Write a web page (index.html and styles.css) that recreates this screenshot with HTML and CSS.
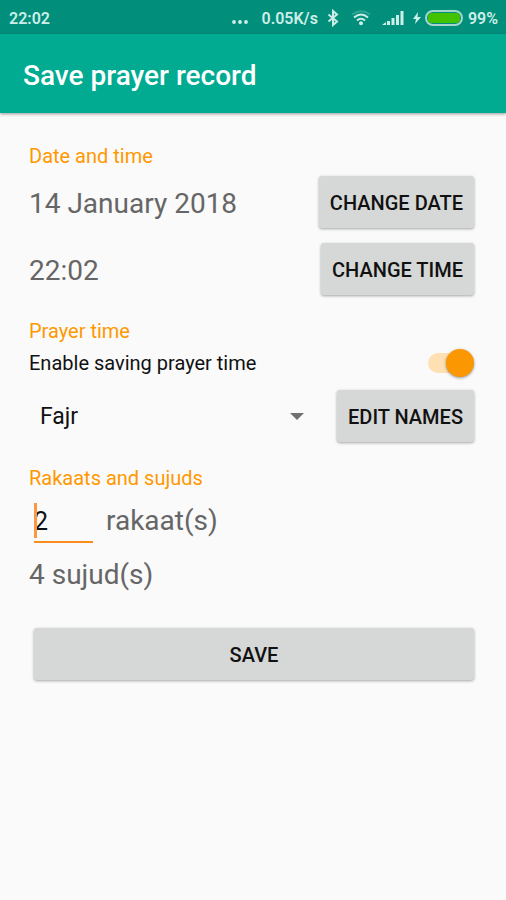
FILE: index.html
```html
<!DOCTYPE html>
<html lang="en">
<head>
    <meta charset="UTF-8">
    <meta name="viewport" content="width=device-width, initial-scale=1.0">
    <title>Save prayer record</title>
    <link rel="stylesheet" href="styles.css">
</head>
<body>
    <!-- Status bar -->
    <div class="status-bar">
        <span class="clock">22:02</span>
        <div class="status-icons">
            <svg class="dots" width="18" height="16" viewBox="0 0 18 16">
                <circle cx="3" cy="12" r="1.900"/>
                <circle cx="9" cy="12" r="1.900"/>
                <circle cx="15" cy="12" r="1.900"/>
            </svg>
            <span class="speed">0.05K/s</span>
            <svg class="bluetooth" width="12" height="18" viewBox="0 0 12 18">
                <path d="M1.500 5.500l8.500 7L6 16V2l4 3.500-8.500 7"/>
            </svg>
            <svg class="wifi" width="20" height="16" viewBox="0 0 20 16">
                <path class="wifi-faint" d="M1 4.500Q10-2 19 4.500"/>
                <path d="M3 7.500Q10 1.500 17 7.500M6 10.500Q10 7 14 10.500"/>
                <circle cx="10" cy="13.300" r="2"/>
            </svg>
            <svg class="signal" width="22" height="16" viewBox="0 0 22 16">
                <path d="M0 15l4-3v3zM5 11h3v4H5zM9.500 8h3v7h-3zM14 5h3v10h-3zM18.500 1H21.500v14h-3z"/>
            </svg>
            <svg class="bolt" width="8" height="14" viewBox="0 0 8 14">
                <path d="M5 1L0 8h3l-1 5 6-7H4.500z"/>
            </svg>
            <svg class="battery" width="38" height="16" viewBox="0 0 38 16">
                <rect class="battery-case" x="1" y="1" width="36" height="14" rx="7"/>
                <rect class="battery-level" x="3" y="3" width="32" height="10" rx="4"/>
            </svg>
            <span>99%</span>
        </div>
    </div>

    <header class="app-bar">
        <h1>Save prayer record</h1>
    </header>

    <form class="record-form">
        <!-- Date and time -->
        <section>
            <h2>Date and time</h2>
            <div class="row">
                <span class="value">14 January 2018</span>
                <button type="button" class="btn">CHANGE DATE</button>
            </div>
            <div class="row">
                <span class="value">22:02</span>
                <button type="button" class="btn">CHANGE TIME</button>
            </div>
        </section>

        <!-- Prayer time -->
        <section>
            <h2>Prayer time</h2>
            <div class="switch-row">
                <label for="enable-time">Enable saving prayer time</label>
                <input type="checkbox" id="enable-time" class="switch" role="switch" checked>
            </div>
            <div class="row">
                <div class="spinner">
                    <select id="prayer-name" aria-label="Prayer name">
                        <option selected>Fajr</option>
                    </select>
                    <svg class="arrow" width="14" height="8" viewBox="0 0 14 8">
                        <path d="M0 0h14L7 7z"/>
                    </svg>
                </div>
                <button type="button" class="btn">EDIT NAMES</button>
            </div>
        </section>

        <!-- Rakaats and sujuds -->
        <section>
            <h2>Rakaats and sujuds</h2>
            <div class="rakaat-row">
                <div class="count">
                    <input type="text" id="rakaats" inputmode="numeric" value="2">
                    <span class="caret"></span>
                </div>
                <label class="value" for="rakaats">rakaat(s)</label>
            </div>
            <p class="value">4 sujud(s)</p>
        </section>

        <button type="submit" class="btn save-btn">SAVE</button>
    </form>
</body>
</html>
```
FILE: styles.css
```css
* {
    margin: 0;
    padding: 0;
    box-sizing: border-box;
    font-family: Roboto, sans-serif;
}

body {
    background-color: #fafafa;
    color: #111;
    min-height: 100vh;
}

.status-bar {
    display: flex;
    align-items: center;
    justify-content: space-between;
    height: 34px;
    padding: 2px 8px 0 9px;
    background-color: #018f7c;
    color: #cdeee8;
    font-size: 16px;
    font-weight: 600;
}

.status-icons {
    display: flex;
    align-items: center;
}

.status-icons svg {
    fill: #cdeee8;
}

.speed {
    margin: 0 9px 0 12px;
}

.status-icons .bluetooth {
    fill: none;
    stroke: #cdeee8;
    stroke-width: 2;
}

.wifi {
    margin: 0 11px 0 12px;
}

.wifi path {
    fill: none;
    stroke: #cdeee8;
    stroke-width: 2;
}

.wifi .wifi-faint {
    stroke: #2fa593;
}

.bolt {
    margin: 0 4px 0 9px;
}

.battery {
    margin-right: 5px;
}

.status-icons .battery-case {
    fill: none;
    stroke: #a5d5cc;
    stroke-width: 2;
}

.status-icons .battery-level {
    fill: #43c300;
}

.app-bar {
    display: flex;
    align-items: center;
    height: 79px;
    padding: 4px 23px 0;
    background-color: #00ab92;
    color: white;
    box-shadow: 0 1px 3px rgba(0, 0, 0, 0.4);
}

h1 {
    font-size: 28px;
    font-weight: 500;
}

.record-form {
    padding: 31px 32px 24px 29px;
}

section {
    margin-bottom: 24px;
}

h2 {
    color: #ff9800;
    font-size: 20px;
    font-weight: 400;
    line-height: 24px;
}

.row {
    display: flex;
    align-items: center;
    justify-content: space-between;
    margin-bottom: 15px;
}

h2 + .row {
    margin-top: 8px;
}

.row:last-child {
    margin-bottom: 0;
}

.value {
    padding-top: 3px;
    color: #666;
    font-size: 28px;
    line-height: 38px;
}

.btn {
    height: 52px;
    padding: 1px 11px 0;
    border: none;
    border-radius: 3px;
    background-color: #d6d7d7;
    color: #111;
    font-size: 20px;
    font-weight: 500;
    box-shadow: 0 1px 3px rgba(0, 0, 0, 0.35);
    cursor: pointer;
}

.switch-row {
    display: flex;
    align-items: center;
    justify-content: space-between;
    height: 40px;
    margin-bottom: 7px;
    font-size: 20px;
}

.switch {
    display: flex;
    align-items: center;
    justify-content: flex-start;
    width: 46px;
    height: 20px;
    border-radius: 10px;
    background-color: #ccc;
    appearance: none;
    cursor: pointer;
}

.switch::before {
    content: "";
    width: 28px;
    height: 28px;
    border-radius: 50%;
    background-color: #f1f1f1;
    box-shadow: 0 1px 3px rgba(0, 0, 0, 0.4);
}

.switch:checked {
    justify-content: flex-end;
    background-color: #fee0b2;
}

.switch:checked::before {
    background-color: #fb9700;
}

.spinner {
    position: relative;
    flex: 1;
    margin-right: 22px;
}

.spinner select {
    width: 100%;
    height: 48px;
    padding-left: 11px;
    border: none;
    background: none;
    color: #111;
    font-size: 23px;
    appearance: none;
}

.arrow {
    position: absolute;
    right: 11px;
    top: 21px;
    fill: #707070;
    pointer-events: none;
}

.rakaat-row {
    display: flex;
    align-items: center;
    gap: 13px;
    margin: 5px 0 10px 5px;
}

.count {
    position: relative;
    width: 59px;
}

.count input {
    display: block;
    width: 100%;
    height: 48px;
    padding-top: 7px;
    border: none;
    border-bottom: 2px solid #fb8c1e;
    border-radius: 0;
    background: none;
    color: #111;
    font-size: 25px;
    outline: none;
}

.caret {
    position: absolute;
    left: 0;
    top: 8px;
    width: 3px;
    height: 35px;
    background-color: #fb9740;
}

.save-btn {
    display: block;
    width: calc(100% - 5px);
    margin: 34px 0 0 5px;
}
```
